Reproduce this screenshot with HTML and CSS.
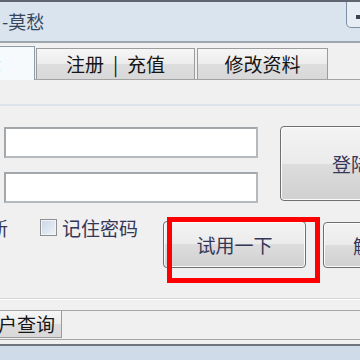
FILE: index.html
```html
<!DOCTYPE html>
<html lang="zh-CN">
<head>
<meta charset="utf-8">
<link rel="stylesheet" href="styles.css">
</head>
<body>
<div class="window">
  <div class="titlebar">
    <div class="title">-莫愁</div>
    <div class="minbtn"><span class="minglyph"></span></div>
  </div>
  <div class="tabs">
    <div class="tab active w1"><span class="acttext">登录</span></div>
    <div class="tab w2">注册<span class="bar">|</span>充值</div>
    <div class="tab w3">修改资料</div>
  </div>
  <div class="rule"></div>
  <div class="form">
    <div class="fields">
      <div class="field"></div>
      <div class="field"></div>
    </div>
    <div class="btn login">登陆</div>
  </div>
  <div class="opts">
    <span class="txt auto">自动更新</span>
    <span class="check"></span>
    <span class="txt label">记住密码</span>
    <div class="trial-wrap">
      <div class="btn trial">试用一下</div>
      <div class="redbox"></div>
    </div>
    <div class="btn unbind">解绑</div>
  </div>
  <div class="sep"></div>
  <div class="btabs">
    <div class="btab">用户查询</div>
  </div>
  <div class="status"></div>
</div>
</body>
</html>
```
FILE: styles.css
```css
* { box-sizing: border-box; }
html, body { margin: 0; padding: 0; }
body {
  width: 360px;
  height: 360px;
  overflow: hidden;
  background: #f0f0f0;
  font-family: "Noto Sans CJK SC", "Noto Sans", sans-serif;
}
.window { margin-left: -70px; width: 430px; }

.titlebar {
  height: 43px;
  background: #dae4ef;
  border-top: 2px solid #5f6670;
  border-bottom: 2px solid #9da5ae;
  display: flex;
  justify-content: space-between;
  align-items: flex-start;
}
.title {
  margin: 8px 0 0 72px;
  font-size: 18px;
  line-height: 22px;
  color: #35465c;
}
.minbtn {
  width: 26px;
  height: 26px;
  margin-right: -12px;
  border: 1px solid #7f8fa3;
  border-top: none;
  border-radius: 0 0 0 5px;
  background: #e6edf5;
  padding: 13px 0 0 9px;
}
.minglyph { display: block; width: 8px; height: 4px; background: #3c4450; }

.tabs {
  display: flex;
  align-items: flex-end;
  height: 37px;
  padding-left: 8px;
  border-bottom: 1px solid #a3a3a3;
}
.tab {
  height: 31px;
  border: 1px solid #9c9c9c;
  border-bottom: none;
  background: linear-gradient(#f6f6f6 0%, #ececec 50%, #dedede 50%, #d8d8d8 100%);
  font-size: 19px;
  line-height: 29px;
  text-align: center;
  color: #151515;
  margin-left: 2px;
}
.tab.active {
  height: 34px;
  margin-bottom: -1px;
  margin-left: 0;
  background: #f6fafd;
  border-color: #8d9cab;
  display: flex;
  justify-content: flex-end;
  padding-right: 33px;
}
.acttext { display: block; }
.w1 { width: 97px; }
.w2 { width: 159px; margin-left: 1px; }
.w3 { width: 131px; }
.bar { margin: 0 9px; }

.rule { margin-top: 24px; border-top: 2px solid #dde4ec; }

.form { display: flex; align-items: flex-start; margin-top: 20px; }
.fields {
  margin: 1px 0 0 74px;
  width: 254px;
  display: flex;
  flex-direction: column;
  gap: 14px;
  flex-shrink: 0;
}
.field {
  height: 31px;
  background: #fff;
  border: 2px solid #b4b9be;
  border-top-color: #a2a7ac;
  border-left-color: #a2a7ac;
}
.btn {
  flex-shrink: 0;
  border: 1px solid #6f6f6f;
  border-radius: 4px;
  background: linear-gradient(#f3f3f3 0%, #ebebeb 50%, #dddddd 50%, #d0d0d0 100%);
  box-shadow: inset 0 0 0 1px #fbfbfb;
  color: #363657;
  font-size: 19px;
  display: flex;
  align-items: center;
  justify-content: center;
}
.login { margin-left: 22px; width: 142px; height: 75px; }

.opts { display: flex; align-items: flex-start; margin-top: 14px; }
.txt { font-size: 19px; line-height: 20px; color: #363657; flex-shrink: 0; }
.auto { margin: 1px 0 0 2px; }
.check {
  flex-shrink: 0;
  width: 17px;
  height: 17px;
  margin: 2px 0 0 32px;
  border: 1px solid #8e8f8f;
  background: linear-gradient(135deg, #c9d7e6, #eef3f9);
  box-shadow: inset 0 0 0 1px #f2f4f6;
}
.label { margin: 1px 0 0 5px; }
.trial-wrap { position: relative; margin: 4px 0 0 25px; flex-shrink: 0; }
.trial { width: 143px; height: 47px; }
.redbox {
  position: absolute;
  left: 4px;
  top: -4px;
  width: 153px;
  height: 66px;
  border: 5px solid #ff0000;
}
.unbind { margin: 5px 0 0 17px; width: 98px; height: 46px; }

.sep {
  margin-top: 30px;
  height: 2px;
  border-top: 1px solid #d6d6d6;
  border-bottom: 1px solid #fdfdfd;
}
.btabs {
  margin-top: 10px;
  height: 30px;
  border-top: 1px solid #a6a6a6;
  border-bottom: 1px solid #a6a6a6;
}
.btab {
  margin-left: 42px;
  width: 90px;
  height: 27px;
  border: 1px solid #9c9c9c;
  border-top: none;
  background: linear-gradient(#f6f6f6 0%, #ececec 50%, #dedede 50%, #d8d8d8 100%);
  font-size: 19px;
  line-height: 25px;
  text-align: center;
  color: #151515;
}
.status {
  margin-top: 4px;
  height: 20px;
  border-top: 2px solid #6d747c;
  background: #cfdbe8;
}
```
